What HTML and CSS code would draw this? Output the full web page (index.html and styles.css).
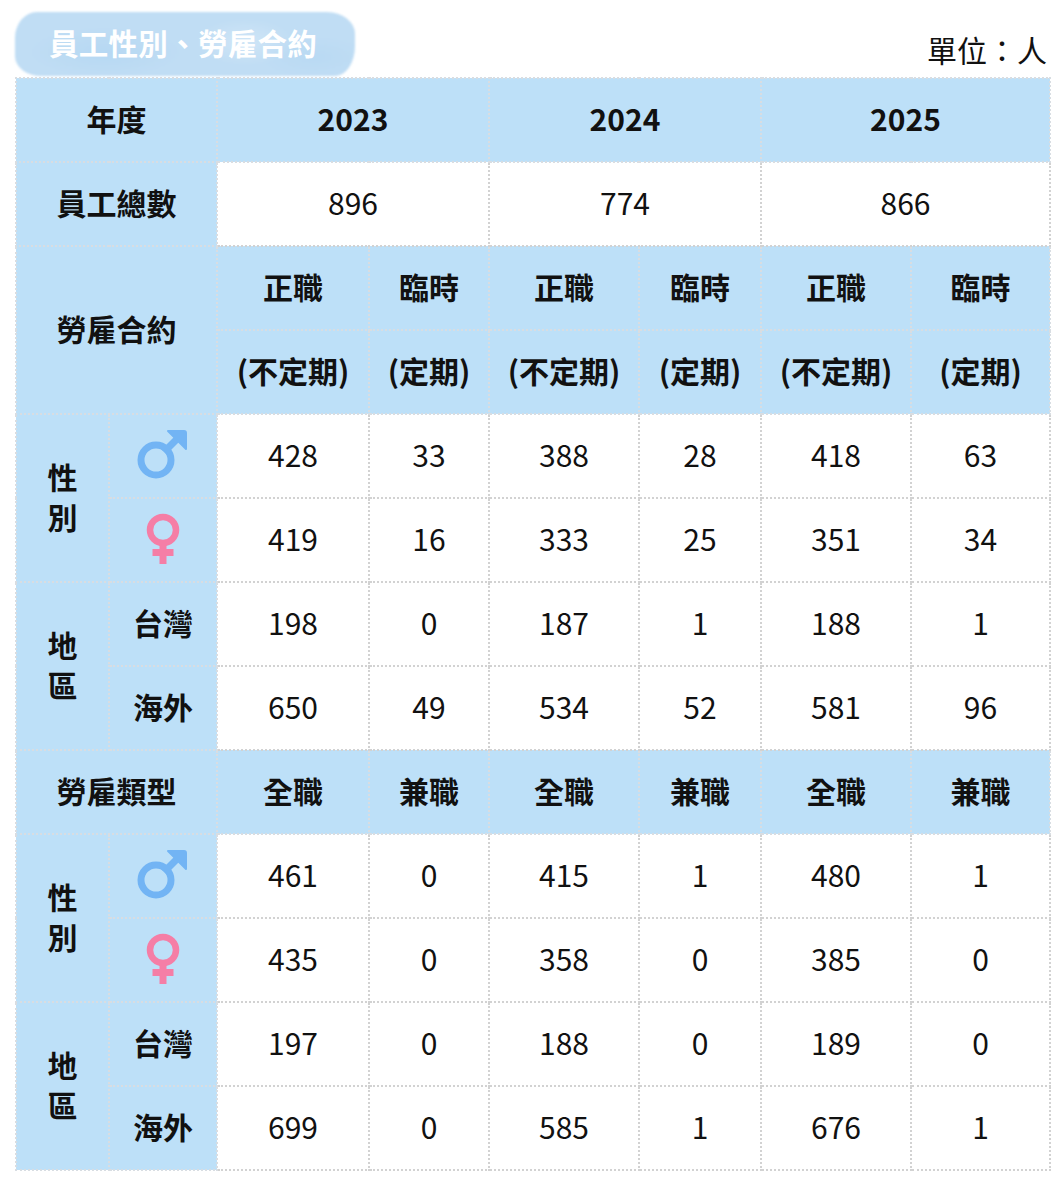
FILE: index.html
```html
<!DOCTYPE html>
<html lang="zh-Hant">
<head>
<meta charset="utf-8">
<link rel="stylesheet" href="styles.css">
</head>
<body>
<div class="page">
  <div class="top">
    <div class="badge"><span>員工性別、勞雇合約</span></div>
    <div class="unit">單位：人</div>
  </div>
  <table class="tbl">
    <colgroup>
      <col style="width:93px"><col style="width:108px"><col style="width:152px"><col style="width:120px"><col style="width:150px"><col style="width:122px"><col style="width:150px"><col style="width:139px">
    </colgroup>
    <tr>
      <th colspan="2">年度</th>
      <th colspan="2">2023</th>
      <th colspan="2">2024</th>
      <th colspan="2">2025</th>
    </tr>
    <tr>
      <th colspan="2">員工總數</th>
      <td colspan="2">896</td>
      <td colspan="2">774</td>
      <td colspan="2">866</td>
    </tr>
    <tr>
      <th colspan="2" rowspan="2">勞雇合約</th>
      <th>正職</th><th>臨時</th><th>正職</th><th>臨時</th><th>正職</th><th>臨時</th>
    </tr>
    <tr>
      <th>(不定期)</th><th>(定期)</th><th>(不定期)</th><th>(定期)</th><th>(不定期)</th><th>(定期)</th>
    </tr>
    <tr>
      <th rowspan="2" class="vert">性<br>別</th>
      <th><svg class="ico" viewBox="0 0 52 52"><circle cx="19" cy="32" r="15" fill="none" stroke="#72b4f4" stroke-width="7"/><line x1="27" y1="24" x2="44" y2="7" stroke="#72b4f4" stroke-width="7"/><path d="M31 3 H47 Q49 3 49 5 V21 Z" fill="#72b4f4" stroke="#72b4f4" stroke-width="2" stroke-linejoin="round"/></svg></th>
      <td>428</td><td>33</td><td>388</td><td>28</td><td>418</td><td>63</td>
    </tr>
    <tr>
      <th><svg class="ico" viewBox="0 0 52 52"><circle cx="26" cy="18" r="13" fill="none" stroke="#f57ea6" stroke-width="6.5"/><rect x="22.5" y="30" width="7" height="22" fill="#f57ea6"/><rect x="15.5" y="37" width="21" height="7" fill="#f57ea6"/></svg></th>
      <td>419</td><td>16</td><td>333</td><td>25</td><td>351</td><td>34</td>
    </tr>
    <tr>
      <th rowspan="2" class="vert">地<br>區</th>
      <th>台灣</th>
      <td>198</td><td>0</td><td>187</td><td>1</td><td>188</td><td>1</td>
    </tr>
    <tr>
      <th>海外</th>
      <td>650</td><td>49</td><td>534</td><td>52</td><td>581</td><td>96</td>
    </tr>
    <tr>
      <th colspan="2">勞雇類型</th>
      <th>全職</th><th>兼職</th><th>全職</th><th>兼職</th><th>全職</th><th>兼職</th>
    </tr>
    <tr>
      <th rowspan="2" class="vert">性<br>別</th>
      <th><svg class="ico" viewBox="0 0 52 52"><circle cx="19" cy="32" r="15" fill="none" stroke="#72b4f4" stroke-width="7"/><line x1="27" y1="24" x2="44" y2="7" stroke="#72b4f4" stroke-width="7"/><path d="M31 3 H47 Q49 3 49 5 V21 Z" fill="#72b4f4" stroke="#72b4f4" stroke-width="2" stroke-linejoin="round"/></svg></th>
      <td>461</td><td>0</td><td>415</td><td>1</td><td>480</td><td>1</td>
    </tr>
    <tr>
      <th><svg class="ico" viewBox="0 0 52 52"><circle cx="26" cy="18" r="13" fill="none" stroke="#f57ea6" stroke-width="6.5"/><rect x="22.5" y="30" width="7" height="22" fill="#f57ea6"/><rect x="15.5" y="37" width="21" height="7" fill="#f57ea6"/></svg></th>
      <td>435</td><td>0</td><td>358</td><td>0</td><td>385</td><td>0</td>
    </tr>
    <tr>
      <th rowspan="2" class="vert">地<br>區</th>
      <th>台灣</th>
      <td>197</td><td>0</td><td>188</td><td>0</td><td>189</td><td>0</td>
    </tr>
    <tr>
      <th>海外</th>
      <td>699</td><td>0</td><td>585</td><td>1</td><td>676</td><td>1</td>
    </tr>
  </table>
</div>
</body>
</html>
```

FILE: styles.css
```css
html, body {
  margin: 0;
  padding: 0;
  background: #ffffff;
}
body {
  font-family: "Noto Sans CJK TC", "Noto Sans", sans-serif;
  color: #111111;
}
.page {
  width: 1064px;
  height: 1186px;
}
.top {
  height: 77px;
  display: flex;
  justify-content: space-between;
  align-items: flex-start;
}
.badge {
  position: relative;
  margin-left: 15px;
  margin-top: 12px;
  width: 340px;
  height: 64px;
  display: flex;
  align-items: center;
  justify-content: center;
}
.badge::before {
  content: "";
  position: absolute;
  inset: 0;
  border-radius: 22px 28px 20px 26px / 26px 22px 30px 20px;
  background:
    radial-gradient(ellipse 70px 34px at 230px 30px, rgba(255,255,255,0.25), rgba(255,255,255,0) 70%),
    radial-gradient(ellipse 110px 36px at 90px 40px, rgba(160,205,240,0.3), rgba(160,205,240,0) 70%),
    radial-gradient(ellipse 80px 30px at 300px 45px, rgba(170,210,242,0.3), rgba(170,210,242,0) 70%),
    #c0ddf4;
  filter: blur(0.8px);
}
.badge span {
  position: relative;
  color: #ffffff;
  font-weight: 700;
  font-size: 29.5px;
  letter-spacing: 0.3px;
  margin-left: -4px;
  margin-top: -4px;
}
.unit {
  margin-top: 28px;
  margin-right: 17px;
  font-size: 30px;
  line-height: 42px;
  color: #111111;
}
.tbl {
  margin-left: 15px;
  width: 1034px;
  table-layout: fixed;
  border-collapse: collapse;
  border: 2px dotted #d2d2d2;
}
.tbl th, .tbl td {
  height: 78px;
  padding: 0 0 4px 0;
  border: 2px dotted #d2d2d2;
  text-align: center;
  vertical-align: middle;
  font-size: 30px;
  line-height: 40px;
}
.tbl th {
  background: #bde0f8;
  font-weight: 700;
  border-color: #d8dde2;
}
.tbl td {
  background: #ffffff;
  font-weight: 400;
}
.ico {
  width: 52px;
  height: 52px;
  display: block;
  margin: 0 auto;
}
```
